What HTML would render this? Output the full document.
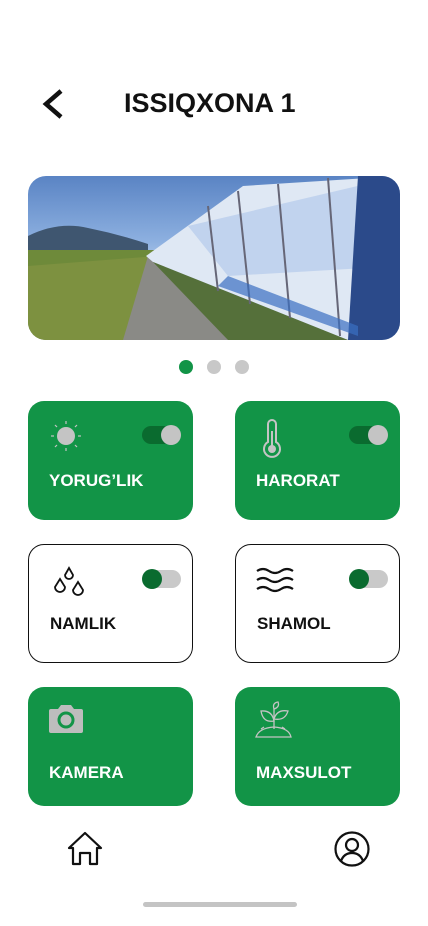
<!DOCTYPE html>
<html><head><meta charset="utf-8"><style>
*{margin:0;padding:0;box-sizing:border-box}
body{width:428px;height:926px;background:#fff;font-family:"Liberation Sans",sans-serif;position:relative;overflow:hidden}
.t{position:absolute;top:88px;left:124px;font-size:27px;font-weight:bold;color:#111;letter-spacing:0px}
.card{position:absolute;width:165px;height:119px;border-radius:16px;background:#129447}
.card.w{background:#fff;border:1px solid #111}
.lbl{position:absolute;left:21px;top:70px;font-size:17px;font-weight:bold;color:#fff}
.w .lbl{color:#111;top:69px}
.tg{position:absolute;left:114px;top:25px;width:38px;height:18px;border-radius:9px;background:#0a6b2f}
.tg i{position:absolute;right:-1px;top:-1px;width:20px;height:20px;border-radius:50%;background:#c4c4c4}
.w .tg{background:#c9c9c9}
.w .tg i{left:-1px;right:auto;background:#0a6b2f}
.ic{position:absolute;left:20px;top:18px}
.dot{position:absolute;top:360px;width:14px;height:14px;border-radius:50%;background:#c8c8c8}
</style></head><body>
<svg style="position:absolute;left:40px;top:89px" width="26" height="30" viewBox="0 0 26 30"><path d="M21 2 L6 15 L21 28" fill="none" stroke="#111" stroke-width="4.5"/></svg>
<div class="t">ISSIQXONA 1</div>
<div style="position:absolute;left:28px;top:176px;width:372px;height:164px;border-radius:18px;overflow:hidden;background:linear-gradient(180deg,#5a84c4 0%,#8db0e0 40%,#c7d8ef 65%,#9ab 70%)">
<svg width="372" height="164" viewBox="0 0 372 164">
<path d="M0 60 Q30 45 60 52 Q90 58 120 68 L120 80 L0 80Z" fill="#3f5670"/>
<rect x="0" y="74" width="130" height="90" fill="#6e8a3a"/>
<path d="M0 90 L130 80 L130 164 L0 164Z" fill="#7d9140"/>
<path d="M95 164 L120 80 L128 80 L200 164Z" fill="#8a8a86"/>
<path d="M118 80 L215 10 L372 0 L372 164 L320 164 L125 86Z" fill="#dfe8f4"/>
<path d="M160 50 L372 0 L372 90 L200 100Z" fill="#b9cdec" opacity=".8"/>
<path d="M125 86 L320 164 L200 164Z" fill="#55703a"/>
<path d="M330 0 L372 0 L372 164 L320 164Z" fill="#2b4a8a"/>
<g stroke="#667" stroke-width="2"><line x1="180" y1="30" x2="190" y2="115"/><line x1="210" y1="15" x2="222" y2="128"/><line x1="250" y1="8" x2="262" y2="142"/><line x1="300" y1="2" x2="312" y2="160"/></g>
<path d="M190 110 L330 160 L330 150 L200 100Z" fill="#3b6fc2" opacity=".7"/>
</svg></div>
<div class="dot" style="left:179px;background:#129447"></div>
<div class="dot" style="left:207px"></div>
<div class="dot" style="left:235px"></div>

<div class="card" style="left:28px;top:401px">
<svg class="ic" width="38" height="38" viewBox="0 0 38 38"><circle cx="18" cy="17" r="9" fill="#c4c4c4"/><g stroke="#c4c4c4" stroke-width="1.2"><line x1="18" y1="2" x2="18" y2="5"/><line x1="18" y1="29" x2="18" y2="32"/><line x1="3" y1="17" x2="6" y2="17"/><line x1="30" y1="17" x2="33" y2="17"/><line x1="7" y1="6" x2="9" y2="8"/><line x1="27" y1="26" x2="29" y2="28"/><line x1="29" y1="6" x2="27" y2="8"/><line x1="9" y1="26" x2="7" y2="28"/></g></svg>
<div class="tg"><i></i></div><div class="lbl">YORUG’LIK</div></div>
<div class="card" style="left:235px;top:401px">
<svg class="ic" style="left:26px" width="22" height="40" viewBox="0 0 22 40"><path d="M7 5 a4 4 0 0 1 8 0 V23 a8 8 0 1 1 -8 0Z" fill="none" stroke="#c4c4c4" stroke-width="2"/><line x1="11" y1="12" x2="11" y2="27" stroke="#c4c4c4" stroke-width="2"/><circle cx="11" cy="30" r="4" fill="#c4c4c4"/></svg>
<div class="tg"><i></i></div><div class="lbl">HARORAT</div></div>

<div class="card w" style="left:28px;top:544px">
<svg class="ic" style="left:22px;top:21px" width="36" height="34" viewBox="0 0 36 34"><g fill="none" stroke="#111" stroke-width="1.8"><path d="M18 2 L22 9 a4 4 0 1 1 -8 0Z"/><path d="M9 13 L14 21 a5 5 0 1 1 -10 0Z"/><path d="M27 16 L32 24 a5 5 0 1 1 -10 0Z"/></g></svg>
<div class="tg"><i></i></div><div class="lbl">NAMLIK</div></div>
<div class="card w" style="left:235px;top:544px">
<svg class="ic" style="top:22px" width="38" height="28" viewBox="0 0 38 28"><g fill="none" stroke="#111" stroke-width="2.2"><path d="M1 4 Q7 0 13 4 T25 4 T37 4"/><path d="M1 13 Q7 9 13 13 T25 13 T37 13"/><path d="M1 22 Q7 18 13 22 T25 22 T37 22"/></g></svg>
<div class="tg"><i></i></div><div class="lbl">SHAMOL</div></div>

<div class="card" style="left:28px;top:687px">
<svg class="ic" style="top:17px" width="36" height="30" viewBox="0 0 36 30"><path d="M3 5 H10 L13 1 H23 L26 5 H33 a2 2 0 0 1 2 2 V27 a2 2 0 0 1 -2 2 H3 a2 2 0 0 1 -2 -2 V7 a2 2 0 0 1 2 -2Z" fill="#bdbdbd"/><circle cx="18" cy="16" r="7" fill="none" stroke="#129447" stroke-width="3"/></svg>
<div class="lbl" style="top:76px">KAMERA</div></div>
<div class="card" style="left:235px;top:687px">
<svg class="ic" style="top:14px" width="38" height="38" viewBox="0 0 38 38"><g fill="none" stroke="#c4c4c4" stroke-width="1.3"><path d="M1 36 Q4 27 19 26 Q34 27 36 36Z"/><path d="M19 28 V8"/><path d="M19 8 Q17 2 23 1 Q25 6 19 8Z"/><path d="M19 20 Q8 22 6 10 Q17 9 19 20Z"/><path d="M19 18 Q30 20 33 10 Q22 8 19 18Z"/><path d="M6 28 l3 -2 M30 28 l-3 -2"/></g></svg>
<div class="lbl" style="top:76px">MAXSULOT</div></div>

<svg style="position:absolute;left:66px;top:831px" width="38" height="36" viewBox="0 0 38 36"><path d="M3 17 L19 2 L35 17 L31 17 V33 H24 V22 H14 V33 H7 V17Z" fill="none" stroke="#111" stroke-width="2.2" stroke-linejoin="round"/></svg>
<svg style="position:absolute;left:333px;top:830px" width="38" height="38" viewBox="0 0 38 38"><circle cx="19" cy="19" r="16.5" fill="none" stroke="#111" stroke-width="2.2"/><circle cx="19" cy="15" r="6" fill="none" stroke="#111" stroke-width="2.2"/><path d="M8 31 Q11 23 19 23 Q27 23 30 31" fill="none" stroke="#111" stroke-width="2.2"/></svg>
<div style="position:absolute;left:143px;top:902px;width:154px;height:5px;border-radius:3px;background:#c4c4c4"></div>
</body></html>
